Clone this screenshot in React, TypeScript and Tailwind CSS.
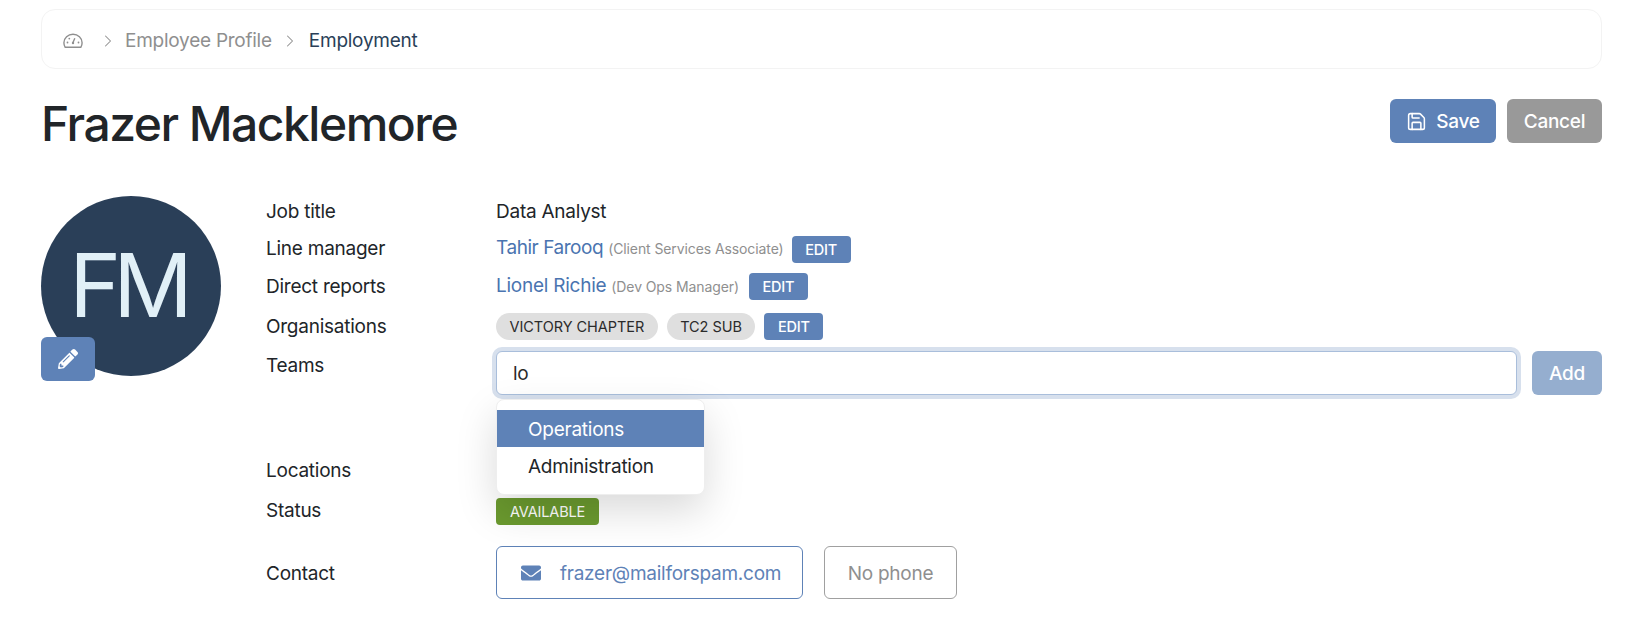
import { ChevronRight, Save } from 'lucide-react';
import { FaEnvelope, FaPencilAlt } from 'react-icons/fa';

function GaugeIcon() {
  return (
    <svg width="20" height="16" viewBox="0 0 20 16" fill="none" stroke="#8f8f8f" strokeWidth="1.4">
      <path d="M2.2 14.3h15.6c.8-1.2 1.3-2.8 1.3-4.5C19.100 5 15 1.300 10 1.300S.9 5 .9 9.800c0 1.700.5 3.300 1.300 4.500Z" />
      <path d="M10 9.500l1.800-4.200" />
      <circle cx="10" cy="10" r="1.200" fill="#8f8f8f" stroke="none" />
      <circle cx="4.500" cy="9.500" r=".9" fill="#8f8f8f" stroke="none" />
      <circle cx="6.300" cy="5.600" r=".9" fill="#8f8f8f" stroke="none" />
      <circle cx="15.500" cy="9.500" r=".9" fill="#8f8f8f" stroke="none" />
    </svg>
  );
}

function EditButton({ className }: { className: string }) {
  return (
    <button className={`h-[27px] w-[59px] rounded-[4px] bg-[#5e82b7] text-[14.5px] font-medium tracking-[-0.2px] text-white ${className}`}>
      EDIT
    </button>
  );
}

function Chip({ label }: { label: string }) {
  return (
    <span className="flex h-[27px] items-center rounded-full bg-[#dfdfdf] px-[13.5px] text-[14.5px] tracking-[-0.05px] text-[#2b2b2b]">
      {label}
    </span>
  );
}

function Row({
  label,
  className,
  labelClassName = 'pt-[3px]',
  children,
}: {
  label: string;
  className: string;
  labelClassName?: string;
  children?: React.ReactNode;
}) {
  return (
    <div className={`flex ${className}`}>
      <div className={`w-[230px] shrink-0 leading-[28px] text-[#212529] ${labelClassName}`}>{label}</div>
      {children}
    </div>
  );
}

export default function App() {
  return (
    <div
      className="h-[644px] w-[1640px] overflow-hidden bg-white pl-[41px] pr-[38px] pt-[9px] text-[19px] tracking-[-0.25px]"
      style={{ fontFamily: 'Inter, sans-serif' }}
    >
      <nav className="flex h-[60px] items-center rounded-[14px] border border-[#f3f3f3] pl-[21px] pt-[4px]">
        <GaugeIcon />
        <ChevronRight className="ml-[15px] mr-[7px] h-[20px] w-[20px] text-[#8f8f8f]" strokeWidth={1.25} />
        <span className="text-[#8f8f8f]">Employee Profile</span>
        <ChevronRight className="ml-[8px] mr-[9px] h-[20px] w-[20px] text-[#8f8f8f]" strokeWidth={1.25} />
        <span className="text-[#2a3f58]">Employment</span>
      </nav>

      <div className="mt-[30px] flex items-start justify-between">
        <h1 className="h-[44px] text-[48px] font-medium leading-[50px] tracking-[-1.5px] text-[#212529]">
          Frazer Macklemore
        </h1>
        <div className="flex gap-[11px]">
          <button className="flex h-[44px] w-[106px] items-center justify-center gap-[9px] rounded-[6px] bg-[#5e82b7] font-medium text-white">
            <Save className="h-[21px] w-[21px]" strokeWidth={1.75} />
            <span className="pt-[3px]">Save</span>
          </button>
          <button className="h-[44px] w-[95px] rounded-[6px] bg-[#999999] pt-[3px] font-medium text-white">
            Cancel
          </button>
        </div>
      </div>

      <div className="mt-[53px] flex">
        <div className="relative h-[185px] w-[225px] shrink-0">
          <div className="flex h-[180px] w-[180px] items-center justify-center rounded-full bg-[#2a3f58] pb-[3px] pr-[8px] text-[88px] tracking-[-8px] text-[#e1f0f7]">
            FM
          </div>
          <button className="absolute left-0 top-[141px] flex h-[44px] w-[54px] items-center justify-center rounded-[6px] bg-[#5e82b7] text-white">
            <FaPencilAlt className="h-[20px] w-[20px]" />
          </button>
        </div>

        <div className="relative min-w-0 flex-1">
          <Row label="Job title" className="h-[28px] items-center">
            <span className="pt-[4px] text-[#212529]">Data Analyst</span>
          </Row>
          <Row label="Line manager" className="mt-[9px] h-[28px] items-center">
            <span className="pt-[3px] tracking-[-0.45px] text-[#4a74b0]">Tahir Farooq</span>
            <span className="ml-[5px] pt-[2px] text-[14px] tracking-[-0.1px] text-[#8f8f8f]">(Client Services Associate)</span>
            <EditButton className="ml-[8px] mt-[5px]" />
          </Row>
          <Row label="Direct reports" className="mt-[10px] h-[28px] items-center">
            <span className="pt-[3px] text-[#4a74b0]">Lionel Richie</span>
            <span className="ml-[5px] pt-[2px] text-[14px] tracking-[-0.1px] text-[#8f8f8f]">(Dev Ops Manager)</span>
            <EditButton className="ml-[10px] mt-[3px]" />
          </Row>
          <Row label="Organisations" className="mt-[12px] h-[28px] items-center">
            <div className="mt-[3px] flex items-center gap-[9px]">
              <Chip label="VICTORY CHAPTER" />
              <Chip label="TC2 SUB" />
              <EditButton className="" />
            </div>
          </Row>
          <Row label="Teams" labelClassName="pt-[1px]" className="mt-[12px] h-[44px] items-start">
            <div className="flex flex-1 items-center gap-[15px]">
              <div className="flex h-[44px] flex-1 items-center rounded-[6px] border border-[#a9bedb] bg-white pl-[16px] pt-[3px] text-[#2b2b2b] shadow-[0_0_0_4px_#d7e0ed]">
                lo
              </div>
              <button className="h-[44px] w-[70px] rounded-[6px] bg-[#95aecf] pt-[3px] font-medium text-white">
                Add
              </button>
            </div>
          </Row>
          <Row label="Locations" className="mt-[60px] h-[28px] items-center" />
          <Row label="Status" className="mt-[12px] h-[28px] items-center">
            <span className="mt-[5px] flex h-[27px] w-[103px] items-center justify-center rounded-[4px] bg-[#6b9a2f] text-[14.5px] tracking-[-0.15px] text-white">
              AVAILABLE
            </span>
          </Row>
          <Row label="Contact" className="mt-[23px] h-[53px] items-center">
            <div className="flex gap-[21px]">
              <div className="flex h-[53px] w-[307px] items-center rounded-[6px] border border-[#5e82b7] pl-[24px] text-[#5e82b7]">
                <FaEnvelope className="h-[20px] w-[20px]" />
                <span className="ml-[19px] pt-[4px]">frazer@mailforspam.com</span>
              </div>
              <div className="flex h-[53px] w-[133px] items-center justify-center rounded-[6px] border border-[#a0a0a0] pt-[4px] text-[#8f8f8f]">
                No phone
              </div>
            </div>
          </Row>

          <div className="absolute left-[230px] top-[203px] z-10 w-[209px] rounded-[8px] border border-[#eeeeee] bg-white py-[10px] shadow-[0_16px_40px_rgba(0,0,0,0.15)]">
            <div className="flex h-[37px] items-center bg-[#5e82b7] pl-[31px] pt-[4px] text-white">Operations</div>
            <div className="flex h-[37px] items-center pl-[31px] pt-[4px] text-[#212529]">Administration</div>
          </div>
        </div>
      </div>
    </div>
  );
}
